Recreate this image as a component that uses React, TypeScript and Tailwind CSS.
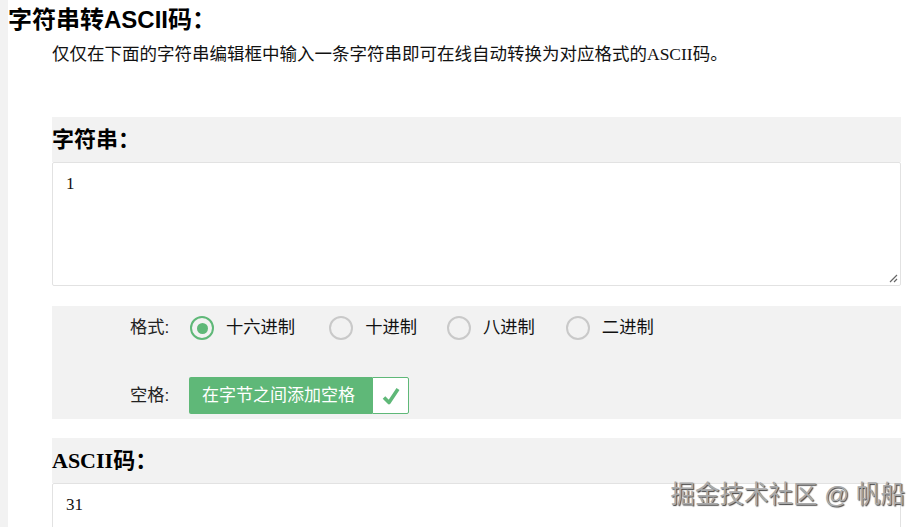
import React from "react";

const SANS = "font-['Liberation_Sans','Noto_Sans_CJK_SC',sans-serif]";

function Radio({ label, checked, gap }: { label: string; checked?: boolean; gap: string }) {
  return (
    <div className={`flex items-center ${gap}`}>
      <span
        className={`flex h-[24px] w-[24px] items-center justify-center rounded-full border-2 ${
          checked ? "border-[#5FB878]" : "border-[#c9c9c9]"
        }`}
      >
        {checked && <span className="h-[11px] w-[11px] rounded-full bg-[#5FB878]" />}
      </span>
      <span className="ml-[12px] text-[17.3px] text-[#111]">{label}</span>
    </div>
  );
}

export default function App() {
  return (
    <div className={`relative flex min-h-screen bg-white ${SANS}`}>
      <div className="w-[8px] shrink-0 bg-[#f2f2f2]" />
      <div className="flex-1 pr-[23px]">
        <h2 className="mt-[5px] text-[24px] font-bold leading-[30px] text-black">字符串转ASCII码：</h2>
        <p className="ml-[44px] mt-[7px] font-['Liberation_Serif','Noto_Sans_CJK_SC',serif] text-[17.5px] leading-[24px] text-[#111]">
          仅仅在下面的字符串编辑框中输入一条字符串即可在线自动转换为对应格式的ASCII码。
        </p>

        <div className="ml-[44px] mt-[51px]">
          <h3 className="h-[45px] bg-[#f2f2f2] pt-[8px] font-['Liberation_Serif','Noto_Sans_CJK_SC',serif] text-[22px] font-bold leading-[30px] text-black">
            字符串：
          </h3>
          <div className="relative h-[124px] rounded-[2px] border border-[#e2e2e2] bg-white px-[13px] pt-[9px] font-['Liberation_Serif',serif] text-[17px] leading-[24px] text-[#111]">
            1
            <svg className="absolute bottom-[2px] right-[2px]" width="10" height="10" viewBox="0 0 10 10">
              <path d="M9 2 L2 9 M9 6 L6 9" stroke="#666" strokeWidth="1.2" />
            </svg>
          </div>

          <div className="mt-[20px] bg-[#f2f2f2] pb-[5px] pt-[3px]">
            <div className="flex h-[38px] items-center">
              <div className="w-[138px] shrink-0 pl-[78px] text-[17.3px] text-[#222]">格式:</div>
              <Radio label="十六进制" checked gap="mr-[34px]" />
              <Radio label="十进制" gap="mr-[30px]" />
              <Radio label="八进制" gap="mr-[31px]" />
              <Radio label="二进制" gap="" />
            </div>
            <div className="mt-[30px] flex h-[37px] items-center">
              <div className="w-[137px] shrink-0 pl-[78px] text-[17.3px] text-[#222]">空格:</div>
              <div className="flex h-[37px] items-stretch rounded-[2px]">
                <span className="flex items-center rounded-l-[2px] bg-[#5FB878] pl-[13px] pr-[17px] text-[17px] text-white">
                  在字节之间添加空格
                </span>
                <span className="flex w-[37px] items-center justify-center rounded-r-[2px] border border-[#5FB878] bg-white">
                  <svg width="22" height="22" viewBox="0 0 22 22">
                    <path d="M4 12.5 L9 17.5 L18 4" fill="none" stroke="#5FB878" strokeWidth="3.6" strokeLinejoin="round" />
                  </svg>
                </span>
              </div>
            </div>
          </div>

          <h3 className="mt-[19px] h-[45px] bg-[#f2f2f2] pt-[8px] font-['Liberation_Serif','Noto_Sans_CJK_SC',serif] text-[22px] font-bold leading-[30px] text-black">
            ASCII码：
          </h3>
          <div className="h-[124px] rounded-[2px] border border-[#e2e2e2] bg-white px-[13px] pt-[9px] font-['Liberation_Serif',serif] text-[17px] leading-[24px] text-[#111]">
            31
          </div>
        </div>
      </div>
      <div className="absolute right-[19px] top-[480px] text-[24.5px] leading-[30px] text-[#aaa] [text-shadow:1px_1px_1px_#444]">
        掘金技术社区 @ 帆船
      </div>
    </div>
  );
}
